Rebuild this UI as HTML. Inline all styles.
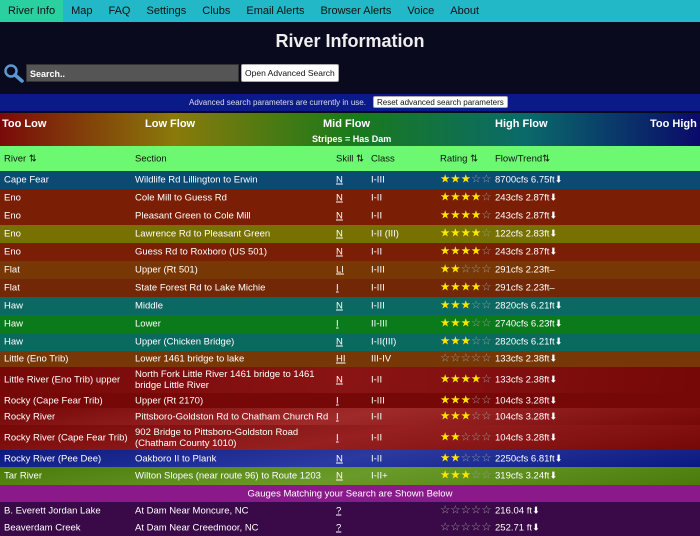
<!DOCTYPE html>
<html><head><meta charset="utf-8"><style>
*{box-sizing:border-box;margin:0;padding:0}
body{width:700px;height:525px;overflow:hidden;background:#0a0a1e;font-family:"Liberation Sans",Arial,sans-serif;color:#fff;font-size:11px}
.nav{height:22px;background:#22b8c8;display:flex;align-items:center;font-size:11px;color:#111}
.nav span{padding:0 8px;line-height:22px}
.nav .act{background:#2ad0a0}
h1{position:absolute;top:31px;left:0;width:700px;text-align:center;font-size:18px;font-weight:bold;color:#eee}
.srch{position:absolute;top:64px;left:26px;width:213px;height:18px;background:#555;border:1px solid #333;font-size:9px;font-weight:bold;padding:4px 3px;color:#fff}
.btn{position:absolute;background:#fff;color:#111;border:1px solid #aaa;border-radius:2px;font-size:8.5px;padding:0 3px}
.banner{position:absolute;top:94px;left:0;width:700px;height:17px;background:#0a1a8a;font-size:8px;color:#ddd}
.legend{position:absolute;top:113px;left:0;width:700px;height:33px;background:linear-gradient(90deg,#7a0a0a,#8a7a0a 25%,#1a7a1a 50%,#0a6a6a 75%,#0a0a6a)}
.legend b{position:absolute;top:5px;font-size:11px}
.row{position:absolute;left:0;width:700px;font-size:9.5px}
.row span{position:absolute;top:50%;transform:translateY(-50%);line-height:11px}
.c1{left:4px}.c2{left:135px;width:200px}.c3{left:336px;text-decoration:underline}.c4{left:371px}.c5{left:440px;font-size:11.5px;font-style:normal}.c5 i{font-style:normal}.c6{left:495px}
.y{color:#ffe600}.g{color:#999}
</style></head><body>
<div class="nav"><span class="act">River Info</span><span>Map</span><span>FAQ</span><span>Settings</span><span>Clubs</span><span>Email Alerts</span><span>Browser Alerts</span><span>Voice</span><span>About</span></div>
<h1>River Information</h1>
<svg style="position:absolute;left:3px;top:63px" width="21" height="20"><circle cx="8" cy="8" r="5.5" fill="none" stroke="#5a9ad0" stroke-width="2.5"/><line x1="12" y1="12" x2="19" y2="18" stroke="#5a9ad0" stroke-width="3.5" stroke-linecap="round"/></svg>
<div class="srch">Search..</div>
<div class="btn" style="top:64px;left:241px;height:18px;line-height:16px">Open Advanced Search</div>
<div class="banner"><span style="position:absolute;left:189px;top:4px">Advanced search parameters are currently in use.</span><div class="btn" style="left:373px;top:2px;height:12px;line-height:11px;font-size:8px">Reset advanced search parameters</div></div>
<div class="legend"><b style="left:2px">Too Low</b><b style="left:145px">Low Flow</b><b style="left:323px">Mid Flow</b><b style="left:495px">High Flow</b><b style="left:650px">Too High</b><b style="left:312px;top:21px;font-size:9px">Stripes = Has Dam</b></div>
<div class="row" style="top:146px;height:25px;background:#6cf870;color:#111"><span class="c1">River ⇅</span><span class="c2">Section</span><span class="c3" style="text-decoration:none">Skill ⇅</span><span class="c4">Class</span><span class="c5" style="font-size:9.5px">Rating ⇅</span><span class="c6">Flow/Trend⇅</span></div>
<div class="row" style="top:171px;height:18px;background:#0c4a74"><span class="c1">Cape Fear</span><span class="c2">Wildlife Rd Lillington to Erwin</span><span class="c3">N</span><span class="c4">I-III</span><span class="c5"><i class="y">★★★</i><i class="g">☆☆</i></span><span class="c6">8700cfs 6.75ft⬇</span></div>
<div class="row" style="top:189px;height:18px;background:#7a1e06"><span class="c1">Eno</span><span class="c2">Cole Mill to Guess Rd</span><span class="c3">N</span><span class="c4">I-II</span><span class="c5"><i class="y">★★★★</i><i class="g">☆</i></span><span class="c6">243cfs 2.87ft⬇</span></div>
<div class="row" style="top:207px;height:18px;background:#7a1e06"><span class="c1">Eno</span><span class="c2">Pleasant Green to Cole Mill</span><span class="c3">N</span><span class="c4">I-II</span><span class="c5"><i class="y">★★★★</i><i class="g">☆</i></span><span class="c6">243cfs 2.87ft⬇</span></div>
<div class="row" style="top:225px;height:18px;background:#787000"><span class="c1">Eno</span><span class="c2">Lawrence Rd to Pleasant Green</span><span class="c3">N</span><span class="c4">I-II (III)</span><span class="c5"><i class="y">★★★★</i><i class="g">☆</i></span><span class="c6">122cfs 2.83ft⬇</span></div>
<div class="row" style="top:243px;height:18px;background:#7a1e06"><span class="c1">Eno</span><span class="c2">Guess Rd to Roxboro (US 501)</span><span class="c3">N</span><span class="c4">I-II</span><span class="c5"><i class="y">★★★★</i><i class="g">☆</i></span><span class="c6">243cfs 2.87ft⬇</span></div>
<div class="row" style="top:261px;height:18px;background:#783806"><span class="c1">Flat</span><span class="c2">Upper (Rt 501)</span><span class="c3">LI</span><span class="c4">I-III</span><span class="c5"><i class="y">★★</i><i class="g">☆☆☆</i></span><span class="c6">291cfs 2.23ft–</span></div>
<div class="row" style="top:279px;height:18px;background:#722806"><span class="c1">Flat</span><span class="c2">State Forest Rd to Lake Michie</span><span class="c3">I</span><span class="c4">I-III</span><span class="c5"><i class="y">★★★★</i><i class="g">☆</i></span><span class="c6">291cfs 2.23ft–</span></div>
<div class="row" style="top:297px;height:18px;background:#0a6a62"><span class="c1">Haw</span><span class="c2">Middle</span><span class="c3">N</span><span class="c4">I-III</span><span class="c5"><i class="y">★★★</i><i class="g">☆☆</i></span><span class="c6">2820cfs 6.21ft⬇</span></div>
<div class="row" style="top:315px;height:18px;background:#0a7a1a"><span class="c1">Haw</span><span class="c2">Lower</span><span class="c3">I</span><span class="c4">II-III</span><span class="c5"><i class="y">★★★</i><i class="g">☆☆</i></span><span class="c6">2740cfs 6.23ft⬇</span></div>
<div class="row" style="top:333px;height:18px;background:#0a6a62"><span class="c1">Haw</span><span class="c2">Upper (Chicken Bridge)</span><span class="c3">N</span><span class="c4">I-II(III)</span><span class="c5"><i class="y">★★★</i><i class="g">☆☆</i></span><span class="c6">2820cfs 6.21ft⬇</span></div>
<div class="row" style="top:351px;height:16px;background:#783806"><span class="c1">Little (Eno Trib)</span><span class="c2">Lower 1461 bridge to lake</span><span class="c3">HI</span><span class="c4">III-IV</span><span class="c5"><i class="g">☆☆☆☆☆</i></span><span class="c6">133cfs 2.38ft⬇</span></div>
<div class="row" style="top:367px;height:26px;background:linear-gradient(100deg,#760808,#8a1414 50%,#760808)"><span class="c1">Little River (Eno Trib) upper</span><span class="c2">North Fork Little River 1461 bridge to 1461 bridge Little River</span><span class="c3">N</span><span class="c4">I-II</span><span class="c5"><i class="y">★★★★</i><i class="g">☆</i></span><span class="c6">133cfs 2.38ft⬇</span></div>
<div class="row" style="top:393px;height:15px;background:#760808"><span class="c1">Rocky (Cape Fear Trib)</span><span class="c2">Upper (Rt 2170)</span><span class="c3">I</span><span class="c4">I-III</span><span class="c5"><i class="y">★★★</i><i class="g">☆☆</i></span><span class="c6">104cfs 3.28ft⬇</span></div>
<div class="row" style="top:408px;height:17px;background:linear-gradient(170deg,#760808,#a02a2a 50%,#760808)"><span class="c1">Rocky River</span><span class="c2" style="width:210px">Pittsboro-Goldston Rd to Chatham Church Rd</span><span class="c3">I</span><span class="c4">I-II</span><span class="c5"><i class="y">★★★</i><i class="g">☆☆</i></span><span class="c6">104cfs 3.28ft⬇</span></div>
<div class="row" style="top:425px;height:25px;background:linear-gradient(170deg,#760808,#962020 50%,#760808)"><span class="c1">Rocky River (Cape Fear Trib)</span><span class="c2">902 Bridge to Pittsboro-Goldston Road (Chatham County 1010)</span><span class="c3">I</span><span class="c4">I-II</span><span class="c5"><i class="y">★★</i><i class="g">☆☆☆</i></span><span class="c6">104cfs 3.28ft⬇</span></div>
<div class="row" style="top:450px;height:17px;background:linear-gradient(170deg,#0a1a80,#2a3aa0 50%,#0a1a80)"><span class="c1">Rocky River (Pee Dee)</span><span class="c2">Oakboro II to Plank</span><span class="c3">N</span><span class="c4">I-II</span><span class="c5"><i class="y">★★</i><i class="g">☆☆☆</i></span><span class="c6">2250cfs 6.81ft⬇</span></div>
<div class="row" style="top:467px;height:18px;background:linear-gradient(170deg,#4a7a0a,#6a9a2a 50%,#4a7a0a)"><span class="c1">Tar River</span><span class="c2" style="width:210px">Wilton Slopes (near route 96) to Route 1203</span><span class="c3">N</span><span class="c4">I-II+</span><span class="c5"><i class="y">★★★</i><i class="g">☆☆</i></span><span class="c6">319cfs 3.24ft⬇</span></div>
<div class="row" style="top:485px;height:17px;background:#8a1a8a"><span style="left:0;width:700px;text-align:center">Gauges Matching your Search are Shown Below</span></div>
<div class="row" style="top:502px;height:17px;background:#3a0a48"><span class="c1">B. Everett Jordan Lake</span><span class="c2">At Dam Near Moncure, NC</span><span class="c3">?</span><span class="c5"><i class="g">☆☆☆☆☆</i></span><span class="c6">216.04 ft⬇</span></div>
<div class="row" style="top:519px;height:17px;background:#3a0a48"><span class="c1">Beaverdam Creek</span><span class="c2">At Dam Near Creedmoor, NC</span><span class="c3">?</span><span class="c5"><i class="g">☆☆☆☆☆</i></span><span class="c6">252.71 ft⬇</span></div>
</body></html>
